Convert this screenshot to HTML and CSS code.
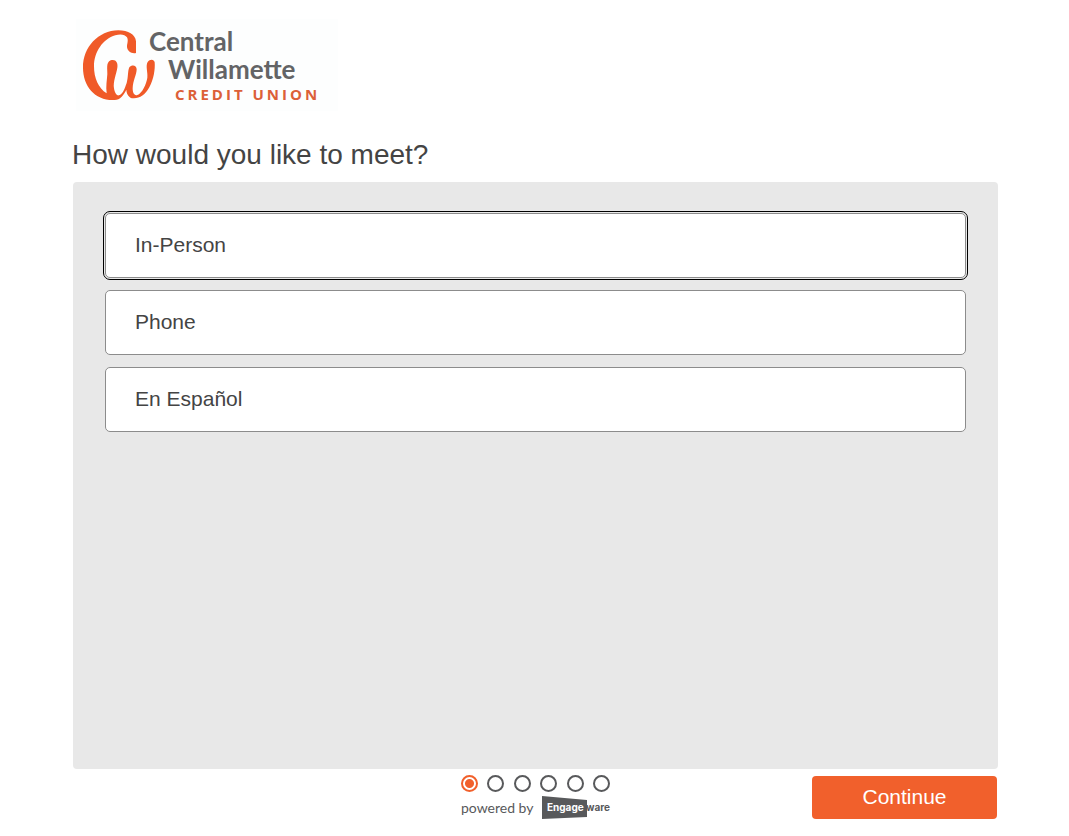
FILE: index.html
```
<!DOCTYPE html>
<html lang="en">
<head>
<meta charset="utf-8">
<meta name="viewport" content="width=device-width, initial-scale=1">
<title>Central Willamette Credit Union</title>
<link rel="stylesheet" href="styles.css">
</head>
<body>
<div class="page">
  <header class="header">
    <svg class="logo" viewBox="70 15 270 100" role="img" aria-label="Central Willamette Credit Union">
      <rect class="logo-bg" x="76" y="19" width="262" height="92"/>
      <svg x="75" y="25" width="90" height="80" viewBox="0 0 270 240">
        <path class="logo-mark" d="M183 84C170 87 157 79 156 66C156 55 161 47 156 37C150 28 136 26 121 31C83 42 57 82 57 124C57 159 70 190 95 205C92 184 96 164 97 147C98 133 92 113 107 106C121 101 130 112 127 128C124 147 114 170 117 190C119 203 125 213 132 211C143 208 149 191 155 174C160 158 158 137 163 127C170 118 185 120 185 133C185 149 173 169 173 190C173 204 178 213 187 210C201 205 214 178 217 158C219 142 211 123 218 111C224 102 237 101 239 112C241 132 236 164 223 187C211 210 193 221 175 220C162 219 155 209 154 194C145 212 136 224 119 225C61 228 24 184 24 128C24 66 70 17 130 16C160 16 181 29 183 49Z"/>
      </svg>
      <text class="logo-name" x="149" y="51">Central</text>
      <text class="logo-name" x="168" y="79">Willamette</text>
      <text class="logo-sub" x="175" y="100">CREDIT UNION</text>
    </svg>
  </header>
  <main class="main">
    <h1 class="title">How would you like to meet?</h1>
    <div class="panel">
      <button type="button" class="option option-focused">In-Person</button>
      <button type="button" class="option">Phone</button>
      <button type="button" class="option">En Español</button>
    </div>
  </main>
  <footer class="footer">
    <div class="progress">
      <ol class="steps" aria-label="Progress">
        <li class="step step-current" aria-current="step"></li>
        <li class="step"></li>
        <li class="step"></li>
        <li class="step"></li>
        <li class="step"></li>
        <li class="step"></li>
      </ol>
      <div class="powered">
        <span>powered by</span>
        <svg class="engageware" viewBox="0 0 68 23" role="img" aria-label="Engageware">
          <path class="engage-box" d="M0 0L45 4V21L0 23Z"/>
          <text class="engage-text" x="5" y="15">Engage</text>
          <text class="ware-text" x="44" y="15">ware</text>
        </svg>
      </div>
    </div>
    <button type="button" class="continue">Continue</button>
  </footer>
</div>
</body>
</html>
```
FILE: styles.css
```
* {
  box-sizing: border-box;
}

body {
  margin: 0;
  background: #fff;
  color: #444;
  font-family: "Liberation Sans", Arial, sans-serif;
}

.page {
  display: flex;
  flex-direction: column;
  min-height: 100vh;
  padding: 15px 71px 17px 73px;
}

.header {
  display: flex;
  margin-left: -3px;
}

.logo {
  width: 270px;
  height: 100px;
}

.logo-bg {
  fill: #fdfefe;
}

.logo-mark {
  fill: #f05a28;
}

.logo-name {
  fill: #636466;
  font: 700 26px Lato, sans-serif;
}

.logo-sub {
  fill: #dc6038;
  font: 700 15px "Open Sans", sans-serif;
  letter-spacing: 3px;
}

.main {
  display: flex;
  flex: 1;
  flex-direction: column;
}

.title {
  margin: 22px 0 10px -1px;
  font-size: 28px;
  font-weight: 400;
  line-height: 35px;
}

.panel {
  display: flex;
  flex: 1;
  flex-direction: column;
  gap: 12px;
  padding: 31px 32px;
  border-radius: 4px;
  background: #e8e8e8;
}

.option {
  height: 65px;
  padding: 0 29px 2px;
  border: 1px solid #8c8c8c;
  border-radius: 5px;
  background: #fff;
  color: #444;
  font: inherit;
  font-size: 21px;
  text-align: left;
}

.option-focused {
  outline: 1px solid #000;
  outline-offset: 1px;
}

.footer {
  display: grid;
  grid-template-columns: 1fr auto 1fr;
  padding-top: 6px;
}

.progress {
  grid-column: 2;
  width: 149px;
}

.steps {
  display: flex;
  justify-content: space-between;
  margin: 0;
  padding: 0;
  list-style: none;
}

.step {
  width: 17px;
  height: 17px;
  border: 2px solid #58595b;
  border-radius: 50%;
}

.step-current {
  border-color: #f1602c;
  background: radial-gradient(circle, #f1602c 4px, #fff 5px);
}

.powered {
  display: flex;
  align-items: center;
  justify-content: space-between;
  margin-top: 4px;
  color: #58595b;
  font: 14px/23px Lato, sans-serif;
}

.engageware {
  width: 68px;
  height: 23px;
  overflow: visible;
}

.engage-box {
  fill: #58595b;
}

.engage-text,
.ware-text {
  font: 700 10px Inter, sans-serif;
}

.engage-text {
  fill: #fff;
}

.ware-text {
  fill: #58595b;
}

.continue {
  justify-self: end;
  width: 185px;
  height: 43px;
  margin: 1px 1px 0 0;
  padding: 0 0 2px;
  border: 0;
  border-radius: 4px;
  background: #f1602c;
  color: #fff;
  font: inherit;
  font-size: 21px;
}
```
